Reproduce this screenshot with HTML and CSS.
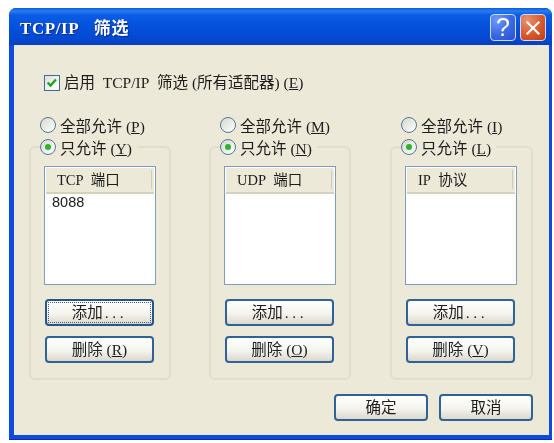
FILE: index.html
```html
<!DOCTYPE html>
<html lang="zh-CN">
<head>
<meta charset="utf-8">
<title>TCP/IP 筛选</title>
<link rel="stylesheet" href="styles.css">
</head>
<body>
<div class="window">
  <div class="titlebar">
    <span class="title">TCP/IP&nbsp;&nbsp;&nbsp;筛选</span>
    <span class="caption-btn help">?</span>
    <span class="caption-btn close">
      <svg viewBox="0 0 16 16" width="16" height="16"><path d="M2.5 2.5 L13.5 13.5 M13.5 2.5 L2.5 13.5" stroke="#fff" stroke-width="2.2" stroke-linecap="square" fill="none"/></svg>
    </span>
  </div>
  <div class="client">
    <div class="enable">
      <span class="check"><svg viewBox="0 0 16 16" width="14" height="14"><path d="M3 7.5 L6.3 11 L12.5 4" stroke="#1f9e1f" stroke-width="2.6" fill="none"/></svg></span>
      <span>启用&nbsp;&nbsp;TCP/IP&nbsp;&nbsp;筛选 (所有适配器) (<u>E</u>)</span>
    </div>
    <div class="columns">
      <section class="col">
        <div class="radio-row"><span class="radio"></span><span class="label">全部允许 (<u>P</u>)</span></div>
        <fieldset class="group">
          <legend class="radio-row"><span class="radio on"></span><span class="label">只允许 (<u>Y</u>)</span></legend>
          <div class="list">
            <div class="list-head"><span>TCP&nbsp;&nbsp;端口</span></div>
            <div class="list-item">8088</div>
          </div>
          <button class="btn wide focus">添加<span class="dots">...</span></button>
          <button class="btn wide">删除 (<u>R</u>)</button>
        </fieldset>
      </section>
      <section class="col">
        <div class="radio-row"><span class="radio"></span><span class="label">全部允许 (<u>M</u>)</span></div>
        <fieldset class="group">
          <legend class="radio-row"><span class="radio on"></span><span class="label">只允许 (<u>N</u>)</span></legend>
          <div class="list">
            <div class="list-head"><span>UDP&nbsp;&nbsp;端口</span></div>
          </div>
          <button class="btn wide">添加<span class="dots">...</span></button>
          <button class="btn wide">删除 (<u>O</u>)</button>
        </fieldset>
      </section>
      <section class="col">
        <div class="radio-row"><span class="radio"></span><span class="label">全部允许 (<u>I</u>)</span></div>
        <fieldset class="group">
          <legend class="radio-row"><span class="radio on"></span><span class="label">只允许 (<u>L</u>)</span></legend>
          <div class="list">
            <div class="list-head"><span>IP&nbsp;&nbsp;协议</span></div>
          </div>
          <button class="btn wide">添加<span class="dots">...</span></button>
          <button class="btn wide">删除 (<u>V</u>)</button>
        </fieldset>
      </section>
    </div>
    <div class="actions">
      <button class="btn action">确定</button>
      <button class="btn action">取消</button>
    </div>
  </div>
</div>
</body>
</html>
```
FILE: styles.css
```css
html, body { background: #fff; }
body {
  margin: 8px 0 0 9px;
  font-family: "Liberation Serif", "Noto Sans CJK SC", serif;
  font-size: 15.5px;
  line-height: 16px;
  color: #1c1c1c;
}
.window {
  width: 543px;
  height: 432px;
  display: flex;
  flex-direction: column;
  background: #0b4be0;
  border-radius: 7px 7px 0 0;
  box-sizing: border-box;
  padding: 0 3px 4px 5px;
  border-bottom: 1px solid #0a2fa8;
  filter: blur(0.35px);
}
.titlebar {
  height: 37px;
  margin: 0 -3px 0 -5px;
  padding: 6px 6px 4px 11px;
  box-sizing: border-box;
  display: flex;
  align-items: center;
  gap: 4px;
  border-radius: 7px 7px 0 0;
  background: linear-gradient(#0a5ae0 0, #2a7cf0 3px, #0a5ce6 7px, #0452dc 18px, #0348d0 31px, #0a3fc0 37px);
}
.title {
  flex: 1;
  color: #fff;
  font-weight: bold;
  font-size: 17px;
  letter-spacing: 0.6px;
  text-shadow: 1px 1px 1px #0a2a90;
  padding-top: 3px;
}
.caption-btn {
  width: 26px;
  height: 27px;
  box-sizing: border-box;
  border: 1px solid #cfdcf6;
  border-radius: 4px;
  display: flex;
  align-items: center;
  justify-content: center;
  color: #fff;
  font: 25px/1 "Liberation Sans", sans-serif;
}
.help { background: radial-gradient(circle at 25% 20%, #6f9bf5, #3a68e4 55%, #2a4fd0); }
.close { background: radial-gradient(circle at 25% 20%, #ea9070, #d85a2c 55%, #c23c10); }
.client {
  flex: 1;
  background: #ece9d8;
  padding: 30px 16px 15px 15px;
  display: flex;
  flex-direction: column;
  min-height: 0;
}
.enable {
  display: flex;
  align-items: center;
  gap: 4px;
  height: 16px;
  margin-left: 15px;
  white-space: pre;
}
.label { padding-top: 3px; }
.check {
  width: 16px;
  height: 16px;
  box-sizing: border-box;
  border: 1px solid #3e6c96;
  background: linear-gradient(135deg, #e0e0d6, #fff);
  display: flex;
  align-items: center;
  justify-content: center;
}
.columns {
  display: grid;
  grid-template-columns: 180px 181px 143px;
  margin-top: 26px;
}
.radio-row {
  display: flex;
  align-items: center;
  gap: 4px;
  height: 16px;
  white-space: nowrap;
}
.col > .radio-row { margin-left: 11px; }
.radio {
  width: 16px;
  height: 16px;
  box-sizing: border-box;
  border: 1px solid #50789f;
  border-radius: 50%;
  background: linear-gradient(135deg, #d8d8cc, #fff);
  display: inline-flex;
  align-items: center;
  justify-content: center;
}
.radio.on::after {
  content: "";
  width: 6px;
  height: 6px;
  border-radius: 50%;
  background: #2bb52b;
}
.group {
  margin: 6px 0 0;
  padding: 0 0 15px;
  width: 142px;
  box-sizing: border-box;
  border: 2px solid #e0ddcc;
  border-radius: 6px;
  display: block;
  min-width: 0;
}
.col:last-child .group { width: 143px; }
legend.radio-row {
  margin-left: 9px;
  padding: 0 5px 0 0;
  display: flex;
}
.list {
  margin: 11px 0 0 13px;
  width: 112px;
  height: 119px;
  box-sizing: border-box;
  border: 1px solid #7f9db9;
  background: #fff;
  padding: 1px;
}
.list-head {
  height: 26px;
  box-sizing: border-box;
  background: #ece9d8;
  border-bottom: 2px solid #d6d0bf;
  padding: 2px 0 0 11px;
  position: relative;
  line-height: 20px;
  font-size: 14.5px;
}
.list-head::after {
  content: "";
  position: absolute;
  right: 2px;
  top: 2px;
  bottom: 3px;
  width: 1px;
  background: #cfcbba;
}
.list-item {
  font: 14.5px/16px "Liberation Sans", sans-serif;
  padding: 0 0 0 6px;
}
.btn {
  display: block;
  box-sizing: border-box;
  height: 27px;
  padding: 1px 0 0;
  border: 2px solid #2f6296;
  border-radius: 4px;
  background: linear-gradient(#fff, #f4f4ee 55%, #dcd8cc);
  font: inherit;
  color: inherit;
  line-height: 16px;
}
.wide {
  width: 109px;
  margin: 10px 0 0 14px;
}
.list + .wide { margin-top: 14px; }
.focus {
  outline: 1px dotted #4a5a88;
  outline-offset: -4px;
  border-color: #24558c;
}
.dots { letter-spacing: 3.6px; margin-left: 2px; }
.actions {
  display: flex;
  justify-content: flex-end;
  gap: 11px;
  margin-top: 14px;
}
.action { width: 94px; }
```
